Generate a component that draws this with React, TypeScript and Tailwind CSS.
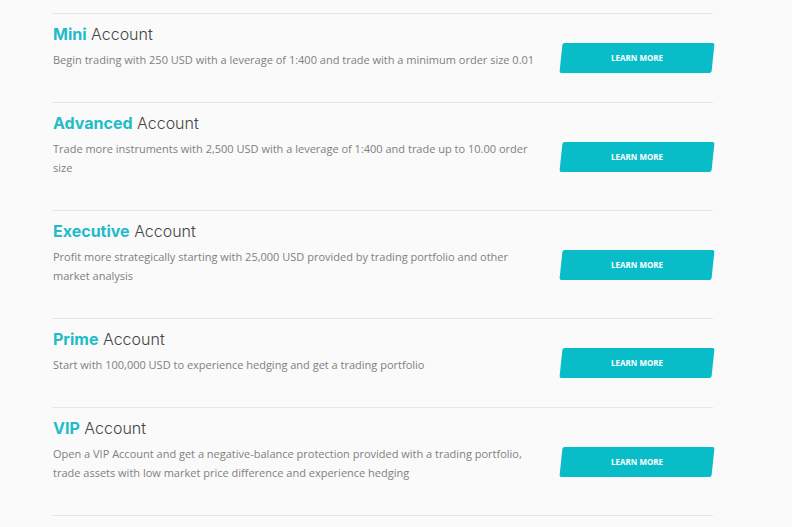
import React from "react";

const rows = [
  { name: "Mini", desc: "Begin trading with 250 USD with a leverage of 1:400 and trade with a minimum order size 0.01" },
  { name: "Advanced", desc: "Trade more instruments with 2,500 USD with a leverage of 1:400 and trade up to 10.00 order size" },
  { name: "Executive", desc: "Profit more strategically starting with 25,000 USD provided by trading portfolio and other market analysis" },
  { name: "Prime", desc: "Start with 100,000 USD to experience hedging and get a trading portfolio" },
  { name: "VIP", desc: "Open a VIP Account and get a negative-balance protection provided with a trading portfolio, trade assets with low market price difference and experience hedging" },
];

export default function App() {
  return (
    <div className="w-[792px] h-[527px] overflow-hidden bg-[#fafafa] pt-[13px]">
      <div className="ml-[52px] w-[661px] border-b border-[#e6e6e6]">
        {rows.map((r) => (
          <div key={r.name} className="flex items-center border-t border-[#e6e6e6]">
            <div className="flex-1 pl-px pt-[8px] pb-[33px]">
              <div className="text-[16px] leading-[24px] font-light text-[#444]" style={{ fontFamily: "Inter, 'Noto Sans', sans-serif" }}>
                <span className="font-bold text-[#22bcc7]">{r.name}</span> Account
              </div>
              <p className="mt-[4px] w-[485px] text-[11px] leading-[19px] text-[#808080]" style={{ fontFamily: "'Open Sans', sans-serif" }}>
                {r.desc}
              </p>
            </div>
            <div className="w-[152px] h-[30px] -skew-x-6 rounded-[2px] bg-[#09bdc8] flex items-center justify-center">
              <span className="skew-x-6 text-[8px] font-bold text-white" style={{ fontFamily: "'Open Sans', sans-serif" }}>LEARN MORE</span>
            </div>
          </div>
        ))}
      </div>
    </div>
  );
}
